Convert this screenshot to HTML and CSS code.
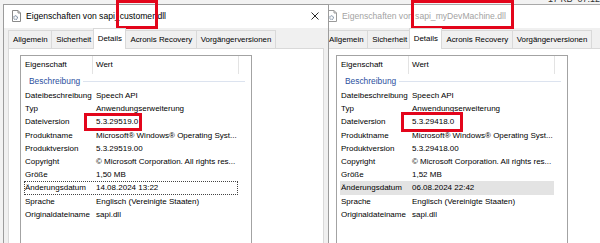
FILE: index.html
```html
<!DOCTYPE html>
<html lang="de">
<head>
<meta charset="utf-8">
<title>Eigenschaften von sapi.dll</title>
<link rel="stylesheet" href="styles.css">
</head>
<body>
<div class="desktop">
  <div class="explorer"><span class="explorer-text">17 KB&nbsp;&nbsp;07.12.2023</span></div>

  <section class="window inactive win-right">
    <header class="titlebar">
      <svg class="ticon" viewBox="0 0 9 12" width="9" height="12"><path d="M0.5 0.5h5.5l2.5 2.5v8.5h-8z" fill="#fff" stroke="#9a9a9a"/><path d="M6 0.5v2.5h2.5" fill="none" stroke="#9a9a9a"/><circle cx="3.6" cy="7.6" r="1.8" fill="none" stroke="#7d8ea3" stroke-width="1.1" stroke-dasharray="0.9 0.5"/></svg>
      <span class="ttext">Eigenschaften von <span class="hl hl-title-r">sapi_myDevMachine.dll</span></span>
    </header>
    <div class="client">
      <nav class="tabs">
        <span class="tab">Allgemein</span>
        <span class="tab">Sicherheit</span>
        <span class="tab sel">Details</span>
        <span class="tab">Acronis Recovery</span>
        <span class="tab">Vorgängerversionen</span>
      </nav>
      <div class="panel">
        <div class="listview">
          <div class="lv-head"><span class="h1">Eigenschaft</span><span class="h2">Wert</span></div>
          <div class="group"><span>Beschreibung</span><i class="gline"></i></div>
          <div class="row"><span class="c1">Dateibeschreibung</span><span class="c2">Speech API</span></div>
          <div class="row"><span class="c1">Typ</span><span class="c2">Anwendungserweiterung</span></div>
          <div class="row"><span class="c1">Dateiversion</span><span class="c2 open"><span class="hl hl-ver-r">5.3.29418.0</span></span></div>
          <div class="row"><span class="c1">Produktname</span><span class="c2">Microsoft® Windows® Operating Syst...</span></div>
          <div class="row"><span class="c1">Produktversion</span><span class="c2">5.3.29418.00</span></div>
          <div class="row"><span class="c1">Copyright</span><span class="c2">© Microsoft Corporation. All rights res...</span></div>
          <div class="row"><span class="c1">Größe</span><span class="c2">1,52 MB</span></div>
          <div class="row selected"><span class="c1">Änderungsdatum</span><span class="c2">06.08.2024 22:42</span></div>
          <div class="row"><span class="c1">Sprache</span><span class="c2">Englisch (Vereinigte Staaten)</span></div>
          <div class="row"><span class="c1">Originaldateiname</span><span class="c2">sapi.dll</span></div>
        </div>
      </div>
    </div>
  </section>

  <section class="window active win-left">
    <header class="titlebar">
      <svg class="ticon" viewBox="0 0 9 12" width="9" height="12"><path d="M0.5 0.5h5.5l2.5 2.5v8.5h-8z" fill="#fff" stroke="#8a8a8a"/><path d="M6 0.5v2.5h2.5" fill="none" stroke="#8a8a8a"/><circle cx="3.6" cy="7.6" r="1.8" fill="none" stroke="#6d7f96" stroke-width="1.1" stroke-dasharray="0.9 0.5"/></svg>
      <span class="ttext">Eigenschaften von sapi_<span class="hl hl-title-l">customer</span>.dll</span>
      <svg class="close" viewBox="0 0 8 8" width="8" height="8"><path d="M0.5 0.5l7 7M7.5 0.5l-7 7" stroke="#111" stroke-width="0.9" fill="none"/></svg>
    </header>
    <div class="client">
      <nav class="tabs">
        <span class="tab">Allgemein</span>
        <span class="tab">Sicherheit</span>
        <span class="tab sel">Details</span>
        <span class="tab">Acronis Recovery</span>
        <span class="tab">Vorgängerversionen</span>
      </nav>
      <div class="panel">
        <div class="listview">
          <div class="lv-head"><span class="h1">Eigenschaft</span><span class="h2">Wert</span></div>
          <div class="group"><span>Beschreibung</span><i class="gline"></i></div>
          <div class="row"><span class="c1">Dateibeschreibung</span><span class="c2">Speech API</span></div>
          <div class="row"><span class="c1">Typ</span><span class="c2">Anwendungserweiterung</span></div>
          <div class="row"><span class="c1">Dateiversion</span><span class="c2 open"><span class="hl hl-ver-l">5.3.29519.0</span></span></div>
          <div class="row"><span class="c1">Produktname</span><span class="c2">Microsoft® Windows® Operating Syst...</span></div>
          <div class="row"><span class="c1">Produktversion</span><span class="c2">5.3.29519.00</span></div>
          <div class="row"><span class="c1">Copyright</span><span class="c2">© Microsoft Corporation. All rights res...</span></div>
          <div class="row"><span class="c1">Größe</span><span class="c2">1,50 MB</span></div>
          <div class="row focused"><span class="c1">Änderungsdatum</span><span class="c2">14.08.2024 13:22</span></div>
          <div class="row"><span class="c1">Sprache</span><span class="c2">Englisch (Vereinigte Staaten)</span></div>
          <div class="row"><span class="c1">Originaldateiname</span><span class="c2">sapi.dll</span></div>
        </div>
      </div>
    </div>
  </section>
</div>
</body>
</html>
```

FILE: styles.css
```css
* { box-sizing: border-box; }
html, body { margin: 0; padding: 0; }
body {
  width: 600px;
  height: 243px;
  overflow: hidden;
  background: #fff;
  font-family: "Liberation Sans", Arial, sans-serif;
  font-size: 8px;
  color: #000;
}
.desktop {
  position: relative;
  width: 600px;
  height: 243px;
  overflow: hidden;
}
.explorer {
  position: absolute;
  inset: 0;
  background: #f2f2f2;
}
.explorer-text {
  position: absolute;
  left: 548px;
  top: -6px;
  font-size: 9px;
  color: #333;
  white-space: nowrap;
}

/* windows */
.window {
  position: absolute;
  top: 4px;
  width: 326px;
  height: 300px;
  border: 1px solid #a9a9a9;
  background: #f0f0f0;
  display: flex;
  flex-direction: column;
}
.win-left { left: 3px; z-index: 2; border-color: #9c9c9c; }
.win-right { left: 319px; z-index: 1; }

.titlebar {
  position: relative;
  height: 23px;
  flex: none;
  background: #fff;
  display: flex;
  align-items: center;
  padding: 0 6px 2px 8px;
  font-size: 8.6px;
  white-space: nowrap;
}
.ticon { flex: none; margin-right: 5px; }
.ttext { color: #000; }
.inactive .ttext { color: #a3a3a3; }
.close { margin-left: auto; margin-right: 3px; }

/* red annotation boxes */
.hl { position: relative; }
.hl::after {
  content: "";
  position: absolute;
  border: 3px solid #e3051b;
  pointer-events: none;
}
.hl-title-l::after { left: -4px; right: -3px; top: -11px; bottom: -8px; }
.hl-title-r::after { left: -4px; right: -8px; top: -11px; bottom: -8px; }
.hl-ver-l { display: inline-block; }
.hl-ver-l::after { left: -12px; right: -4px; top: -2px; bottom: -2px; }
.hl-ver-r { display: inline-block; }
.hl-ver-r::after { left: -11px; right: -9px; top: -3px; bottom: -3px; }

/* client */
.client {
  flex: 1;
  display: flex;
  flex-direction: column;
  padding: 2px 4px 0;
}
.tabs {
  display: flex;
  align-items: flex-end;
  height: 18px;
  flex: none;
  white-space: nowrap;
  font-size: 7.9px;
}
.tab {
  height: 18px;
  line-height: 17px;
  padding: 0 3.5px 0 4px;
  border: 1px solid #d9d9d9;
  border-bottom: none;
  margin-right: -1px;
  background: #f0f0f0;
  color: #000;
}
.tab.sel {
  position: relative;
  z-index: 1;
  height: 21px;
  line-height: 19px;
  margin: 0 -1px -1px -2px;
  background: #fff;
}
.panel {
  flex: 1;
  background: #fff;
  border: 1px solid #d9d9d9;
  padding: 6px 0 0 11px;
}

/* list view */
.listview {
  width: 232px;
  height: 220px;
  border: 1px solid #a3a3a3;
  background: #fff;
}
.lv-head {
  display: grid;
  grid-template-columns: 72px 146px;
  height: 18px;
  line-height: 18px;
}
.h1 { padding-left: 4px; border-right: 1px solid #e3e3e3; }
.h2 { padding-left: 3px; border-right: 1px solid #e3e3e3; }
.group {
  display: flex;
  align-items: center;
  height: 15px;
  padding: 0 6px 1px 8px;
  color: #2b4f9e;
  font-size: 8.4px;
}
.gline {
  flex: 1;
  height: 1px;
  margin-left: 3px;
  background: #dce3ef;
}
.row {
  display: grid;
  grid-template-columns: 68px 146px;
  width: 214px;
  margin-left: 3px;
  height: 13.2px;
  line-height: 13.2px;
  white-space: nowrap;
}
.c1 { padding-left: 1px; overflow: hidden; }
.c2 { padding-left: 4px; overflow: hidden; }
.c2.open { overflow: visible; }
.row.focused { outline: 1px dotted #444; outline-offset: -1px; }
.row.selected { background: #e3e3e3; }
```
